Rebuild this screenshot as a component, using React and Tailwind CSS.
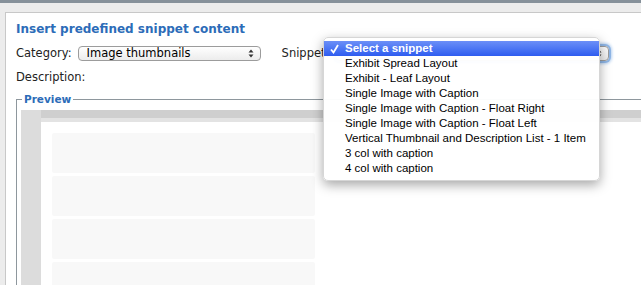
import React from "react";

const snippets = [
  "Exhibit Spread Layout",
  "Exhibit - Leaf Layout",
  "Single Image with Caption",
  "Single Image with Caption - Float Right",
  "Single Image with Caption - Float Left",
  "Vertical Thumbnail and Description List - 1 Item",
  "3 col with caption",
  "4 col with caption",
];

function Arrows() {
  return (
    <svg width="6" height="9" viewBox="0 0 6 9" className="shrink-0">
      <path d="M3 0.5 L5.5 3.5 H0.5 Z" fill="#333" />
      <path d="M3 8.5 L5.5 5.5 H0.5 Z" fill="#333" />
    </svg>
  );
}

function Select({ className, children }) {
  return (
    <div
      className={`h-[15px] flex items-center justify-between pl-[8px] pr-[6px] rounded-[4px] border border-[#9c9c9c] bg-gradient-to-b from-white to-[#ececec] text-[11.5px] text-black ${className}`}
    >
      <span className="truncate">{children}</span>
      <Arrows />
    </div>
  );
}

export default function App() {
  return (
    <div className="relative w-[641px] h-[285px] overflow-hidden bg-[#ececec] flex flex-col font-['DejaVu_Sans',Verdana,sans-serif] text-[#222]">
      <div className="h-[3px] shrink-0 bg-[#86919a]" />
      <div className="flex-1 mt-[9px] ml-[5px] w-[700px] bg-white border-l border-t border-[#c8c8c8] pl-[10px] pt-[8px] flex flex-col">
        <h1 className="text-[12px] leading-[16px] font-bold text-[#2c6cb8]">
          Insert predefined snippet content
        </h1>
        <div className="mt-[8px] flex items-center text-[11.5px] leading-[16px]">
          <span>Category:</span>
          <Select className="ml-[6px] w-[183px]">Image thumbnails</Select>
          <span className="ml-[21px]">Snippet:</span>
          <Select className="ml-[6px] w-[274px] shadow-[0_0_0_2px_#8fb6e6,0_0_3px_3px_#b9d3f2]" />
        </div>
        <div className="mt-[9px] text-[11.5px] leading-[15px]">Description:</div>
        <fieldset className="mt-[8px] border-l border-t border-[#8e979d] pl-[4px] flex-1 flex flex-col">
          <legend className="ml-[1px] px-[2px] text-[10.5px] leading-[13px] font-bold text-[#2c6cb8]">Preview</legend>
          <div className="mt-[4px] flex-1 bg-[#dcdcdc] pl-[20px] flex flex-col">
            <div className="h-[8px] bg-[#cfcfcf]" />
            <div className="h-[4px] bg-[#e3e3e3]" />
            <div className="flex-1 bg-white pt-[11px] pl-[11px] flex flex-col gap-[3px]">
              {[0, 1, 2, 3].map((i) => (
                <div key={i} className="w-[263px] h-[40px] shrink-0 bg-[#f8f8f8] rounded-[2px]" />
              ))}
            </div>
          </div>
        </fieldset>
      </div>

      <div className="absolute left-[323px] top-[37px] w-[277px] h-[144px] bg-white/[0.97] rounded-[5px] shadow-[0_4px_12px_rgba(0,0,0,0.35)] border border-[#d6d6d6] pt-[3px] font-['Liberation_Sans',Arial,sans-serif] text-[11.5px] text-black">
        <div className="h-[15px] flex items-center bg-gradient-to-b from-[#6c8ff7] to-[#2f5cf0] text-white">
          <svg width="9" height="10" viewBox="0 0 9 10" className="ml-[6px] mr-[6px]">
            <path d="M1 5.5 L3.5 8.5 L8 1" stroke="white" strokeWidth="1.8" fill="none" />
          </svg>
          <span className="font-semibold">Select a snippet</span>
        </div>
        {snippets.map((s) => (
          <div key={s} className="h-[15px] flex items-center pl-[21px]">
            {s}
          </div>
        ))}
      </div>
    </div>
  );
}
